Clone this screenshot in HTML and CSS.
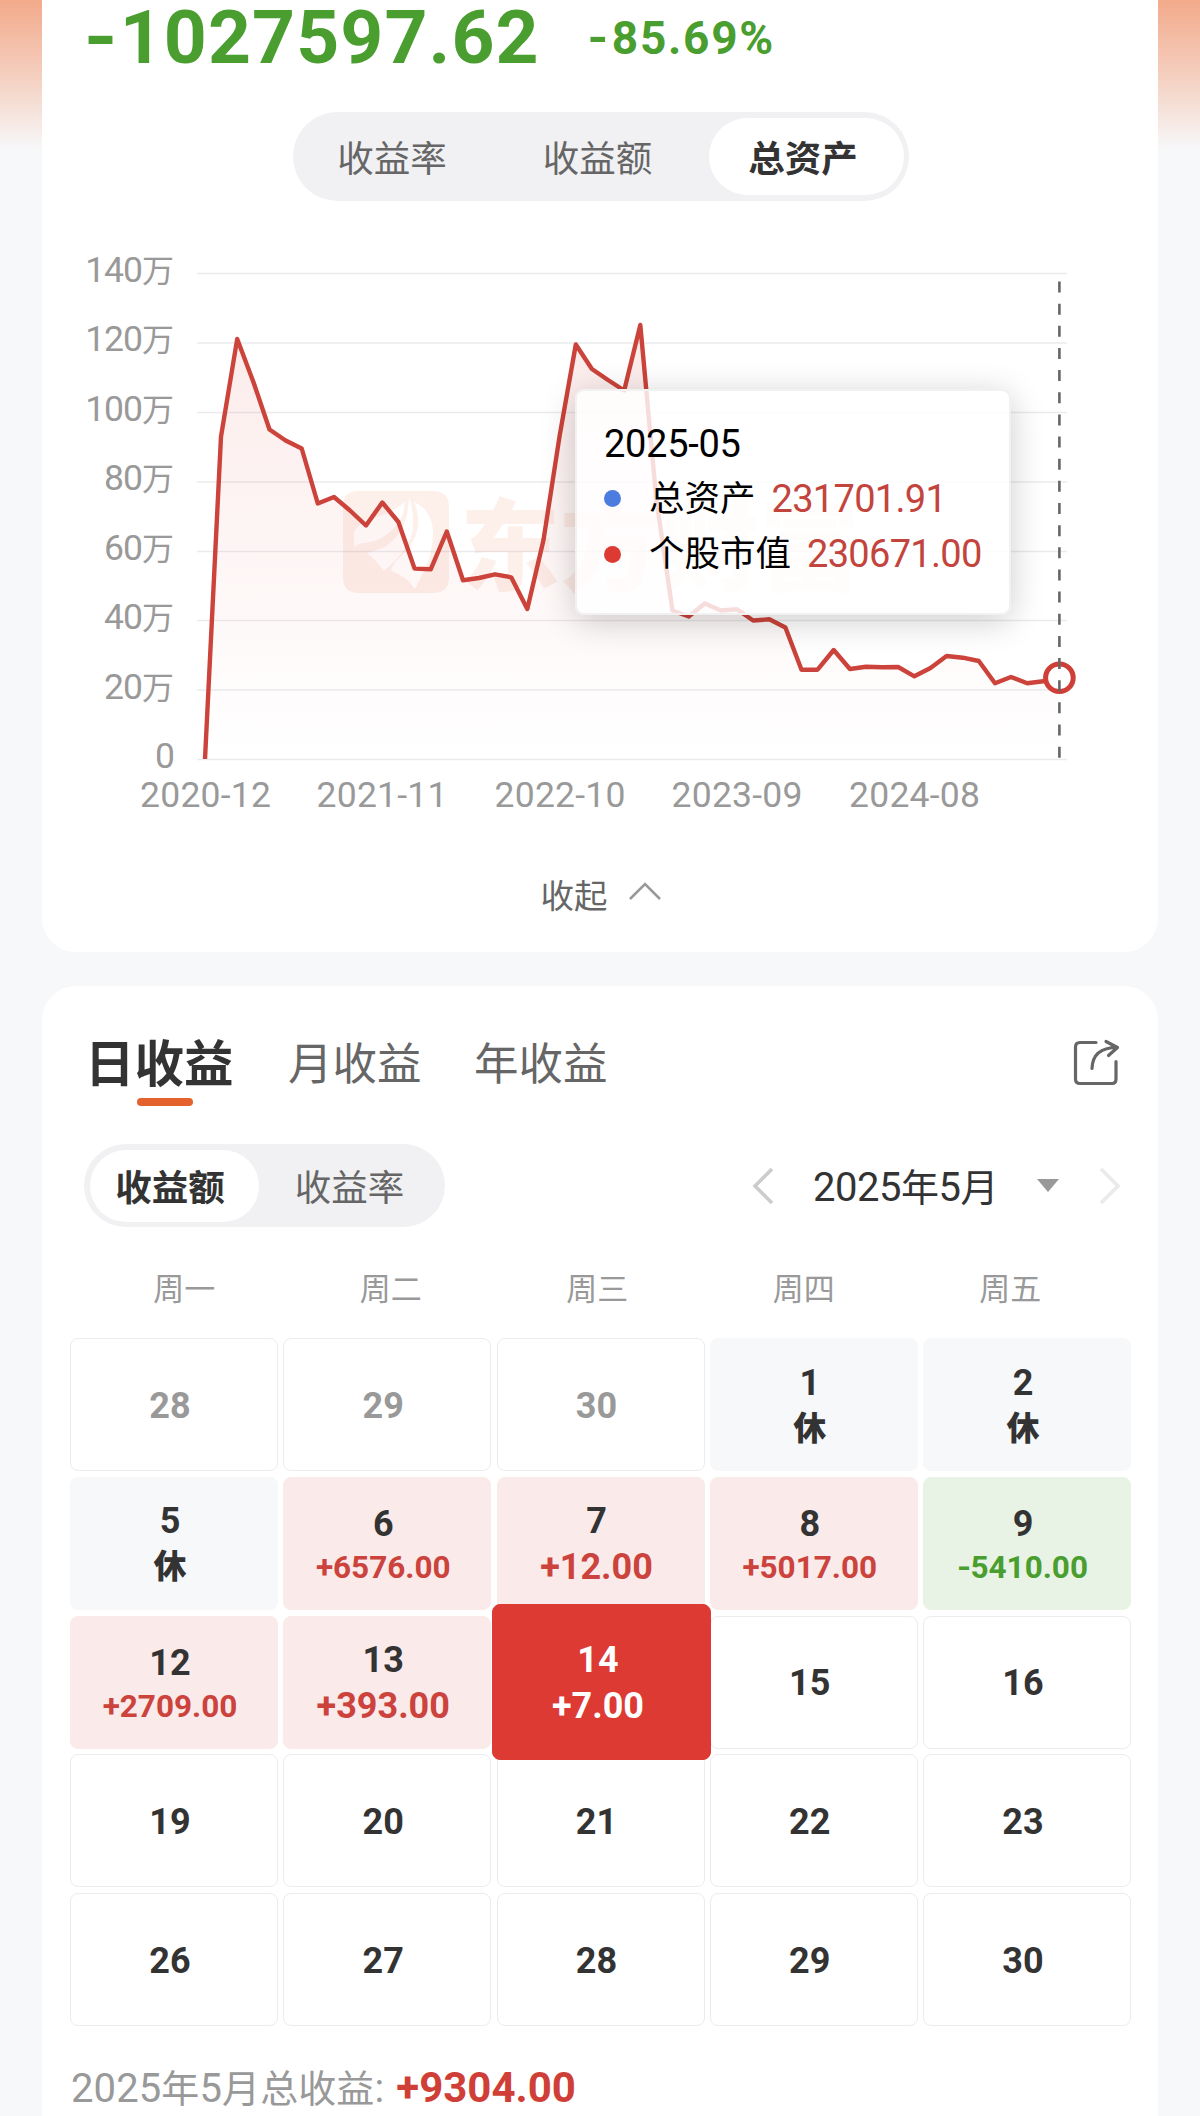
FILE: index.html
```html
<!DOCTYPE html>
<html lang="zh-CN">
<head>
<meta charset="utf-8">
<title>收益</title>
<link rel="stylesheet" href="styles.css">
</head>
<body>
<main class="page">
  <section class="card assets">
    <div class="summary"><span class="total"><i class="sign">-</i>1027597.62</span><span class="rate"><i class="sign">-</i>85.69%</span></div>
    <nav class="segment segment-top"><span>收益率</span><span>收益额</span><span class="on">总资产</span></nav>
    <div class="chart">
      <svg class="plot" viewBox="42 240 1116 610" width="1116" height="610">
        <defs>
          <linearGradient id="area" x1="0" y1="325" x2="0" y2="759" gradientUnits="userSpaceOnUse">
            <stop offset="0" stop-color="#dd3a33" stop-opacity=".1"/>
            <stop offset="1" stop-color="#dd3a33" stop-opacity="0"/>
          </linearGradient>
        </defs>
        <g class="grid">
          <path d="M197 273.5H1067M197 343H1067M197 412.5H1067M197 482H1067M197 551.5H1067M197 620.5H1067M197 690H1067M197 759.5H1067"/>
        </g>
        <path class="area" fill="url(#area)" d="M205 759L221 436.7L237.2 339L253.4 382L269.5 429.5L285.6 440.5L301.7 448.5L317.8 503.5L334 497L350 510.5L366 525.5L382.3 502.5L398.4 522L414.6 568.6L430.7 569.3L446.8 531.5L463 580.3L479 578L495 574.3L511.2 577.3L527.3 609L543.5 540L559.6 436L575.8 344.5L591.9 369L608 380L624.2 390.5L640.3 325L656.4 500L672.5 610.5L688.7 616.5L704.8 603.5L720.9 610.5L737 609.3L753.1 620.5L769.3 619.3L785.4 627.5L801.5 669.7L817.6 669.7L833.7 650L849.9 669L866 666.7L882.1 667.3L898.2 667L914.4 676.3L930.5 668L946.6 656L962.7 657.7L978.8 661L995 683.3L1011 677L1027.2 683.3L1043.3 681.3L1059.4 677.7V759Z"/>
        <g class="watermark">
          <path fill-rule="evenodd" d="M358 491H433Q449 491 449 507V577Q449 593 433 593H359Q343 593 343 577V507Q343 491 358 491ZM404 502C405 518 396 529 380 539C369 544 361 541 354 547L354 537C352 524 371 520 385 514C395 510 402 505 404 502ZM409 498C408 521 403 534 385 547L367 553Q376 560 384 571C396 560 414 544 413 522Q413 509 409 498ZM414 502C422 520 420 540 398 559Q392 565 391 571Q408 577 415 589L424 571Q432 556 433 535C434 514 421 505 414 502Z"/>
          <text class="brand" x="460" y="583">东方财富</text>
        </g>
        <path class="line" d="M205 759L221 436.7L237.2 339L253.4 382L269.5 429.5L285.6 440.5L301.7 448.5L317.8 503.5L334 497L350 510.5L366 525.5L382.3 502.5L398.4 522L414.6 568.6L430.7 569.3L446.8 531.5L463 580.3L479 578L495 574.3L511.2 577.3L527.3 609L543.5 540L559.6 436L575.8 344.5L591.9 369L608 380L624.2 390.5L640.3 325L656.4 500L672.5 610.5L688.7 616.5L704.8 603.5L720.9 610.5L737 609.3L753.1 620.5L769.3 619.3L785.4 627.5L801.5 669.7L817.6 669.7L833.7 650L849.9 669L866 666.7L882.1 667.3L898.2 667L914.4 676.3L930.5 668L946.6 656L962.7 657.7L978.8 661L995 683.3L1011 677L1027.2 683.3L1043.3 681.3L1059.4 677.7"/>
        <circle class="marker" cx="1059.4" cy="677.7" r="13.8"/>
        <path class="cursor" d="M1059.4 281.5V759"/>
        <g class="axis axis-y">
          <text x="174" y="282">140<tspan>万</tspan></text>
          <text x="174" y="351">120<tspan>万</tspan></text>
          <text x="174" y="421">100<tspan>万</tspan></text>
          <text x="174" y="490">80<tspan>万</tspan></text>
          <text x="174" y="560">60<tspan>万</tspan></text>
          <text x="174" y="629">40<tspan>万</tspan></text>
          <text x="174" y="699">20<tspan>万</tspan></text>
          <text x="174" y="768">0</text>
        </g>
        <g class="axis axis-x">
          <text x="205.5" y="807" textLength="131">2020-12</text>
          <text x="382" y="807" textLength="131">2021-11</text>
          <text x="560" y="807" textLength="131">2022-10</text>
          <text x="737" y="807" textLength="131">2023-09</text>
          <text x="914.5" y="807" textLength="131">2024-08</text>
        </g>
      </svg>
      <div class="tooltip">
        <div class="tip-title">2025-05</div>
        <div class="tip-row"><b class="dot blue"></b><span class="tip-name">总资产</span><span class="tip-value">231701.91</span></div>
        <div class="tip-row"><b class="dot red"></b><span class="tip-name">个股市值</span><span class="tip-value">230671.00</span></div>
      </div>
    </div>
    <div class="collapse"><span>收起</span>
      <svg width="34" height="20" viewBox="0 0 34 20"><path d="M2 18L17 3L32 18"/></svg>
    </div>
  </section>

  <section class="card profit">
    <header class="tabs">
      <span class="tab current">日收益</span><span class="tab month">月收益</span><span class="tab">年收益</span>
      <svg class="share" width="48" height="48" viewBox="0 0 48 48"><path d="M24 3.5H8Q3.500 3.500 3.500 8V40Q3.500 44.500 8 44.500H40Q44 44.500 44 40V22.500M20 29.500C20.500 15 29 8.500 45 8.500M34 2.500L45.500 8.500L36.500 16.500"/></svg>
    </header>
    <div class="controls">
      <nav class="segment segment-small"><span class="on">收益额</span><span>收益率</span></nav>
      <div class="picker">
        <svg class="prev" width="24" height="40" viewBox="0 0 24 40"><path d="M21 3L4 20L21 37"/></svg>
        <span class="period">2025<em>年</em>5<em>月</em></span>
        <b class="caret"></b>
        <svg class="next" width="24" height="40" viewBox="0 0 24 40"><path d="M3 3L20 20L3 37"/></svg>
      </div>
    </div>
    <div class="weekdays"><span>周一</span><span>周二</span><span>周三</span><span>周四</span><span>周五</span></div>
    <div class="calendar">
      <div class="day out">28</div><div class="day out">29</div><div class="day out">30</div><div class="day rest">1<strong>休</strong></div><div class="day rest">2<strong>休</strong></div>
      <div class="day rest">5<strong>休</strong></div><div class="day up">6<small>+6576.00</small></div><div class="day up">7<span>+12.00</span></div><div class="day up">8<small>+5017.00</small></div><div class="day down">9<small><i class="sign">-</i>5410.00</small></div>
      <div class="day up">12<small>+2709.00</small></div><div class="day up">13<span>+393.00</span></div><div class="day today">14<span>+7.00</span></div><div class="day">15</div><div class="day">16</div>
      <div class="day">19</div><div class="day">20</div><div class="day">21</div><div class="day">22</div><div class="day">23</div>
      <div class="day">26</div><div class="day">27</div><div class="day">28</div><div class="day">29</div><div class="day">30</div>
    </div>
    <footer class="month-total">2025<em>年</em>5<em>月总收益</em>: <b>+9304.00</b></footer>
  </section>
</main>
</body>
</html>
```
FILE: styles.css
```css
* { box-sizing: border-box; }
body {
  margin: 0;
  background: #f7f8fa;
  font-family: Roboto, "Noto Sans CJK SC", sans-serif;
  color: #333;
}
i, em { font-style: normal; }
.page {
  width: 1200px;
  height: 2116px;
  overflow: hidden;
  padding: 0 42px;
  background: linear-gradient(180deg, #f2aa8a 0, #f4c2ad 50px, #f5dcd2 100px, #f7f8fa 150px);
}
.card { background: #fff; }
.sign { display: inline-block; transform: scaleX(1.15); }

/* Assets card */
.assets { height: 952px; border-radius: 0 0 34px 34px; }
.summary {
  height: 112px;
  display: flex;
  align-items: flex-start;
  padding-left: 44px;
  color: #4a9e2f;
  font-weight: 700;
  white-space: nowrap;
}
.total { width: 503px; font-size: 75px; line-height: 75px; letter-spacing: 1.1px; }
.rate { font-size: 46px; line-height: 76px; letter-spacing: 1.700px; }
.total .sign, .rate .sign { margin-right: 3px; }
.segment { display: flex; background: #f1f1f4; color: #666; }
.segment span { display: flex; align-items: center; justify-content: center; font-size: 36.5px; }
.segment .on { background: #fff; color: #333; font-weight: 700; }
.segment-top { width: 616px; height: 89px; border-radius: 45px; margin-left: 251px; padding: 6px 5px; }
.segment-top span { flex: 1 1 0; padding-bottom: 1px; }
.segment-top span:first-child, .segment-top span:nth-child(2) { flex: 0 0 205px; }
.segment-top span:first-child { margin-left: -7px; padding-right: 3px; }
.segment-top span:nth-child(2) { padding-right: 2px; margin-right: 8px; }
.segment-top .on { border-radius: 39px; padding-right: 7px; }

.chart { position: relative; height: 649px; padding-top: 39px; }
.plot { display: block; }
.grid path { stroke: #eaebee; stroke-width: 1.5; fill: none; }
.line { fill: none; stroke: #cb433a; stroke-width: 4.4; stroke-linejoin: round; }
.marker { fill: #fff; stroke: #cf3f38; stroke-width: 5; }
.cursor { stroke: #666; stroke-width: 2.6; stroke-dasharray: 11 11.15; }
.watermark { fill: #e8703a; fill-opacity: .1; }
.brand { font-size: 100px; font-weight: 900; }
.axis { fill: #999; font-size: 35.500px; font-weight: 400; }
.axis-y { text-anchor: end; letter-spacing: -1px; }
.axis-y tspan { font-size: 32px; letter-spacing: 0; }
.axis-x { text-anchor: middle; }

.tooltip {
  position: absolute;
  left: 533px;
  top: 188px;
  width: 436px;
  height: 226px;
  padding: 26px 0 0 27px;
  border: 2px solid #f1f1f1;
  border-radius: 9px;
  background: rgba(255, 255, 255, .82);
  box-shadow: 0 6px 34px rgba(0, 0, 0, .2);
  color: #000;
}
.tip-title { height: 54px; line-height: 54px; font-size: 38px; letter-spacing: -.3px; }
.tip-row { display: flex; align-items: center; height: 55.5px; }
.dot { width: 17px; height: 17px; border-radius: 50%; margin-right: 28px; }
.blue { background: #4c7ce0; }
.red { background: #dc3a33; }
.tip-name { font-size: 35.500px; line-height: 50px; margin-right: 16px; }
.tip-value { font-size: 38px; letter-spacing: -.7px; color: #c3443d; }
.collapse { height: 60px; margin: 13px 0 0 2px; display: flex; align-items: center; justify-content: center; gap: 20px; padding-top: 1px; font-size: 33.500px; color: #666; }
.collapse svg { fill: none; stroke: #999; stroke-width: 2.6; margin-bottom: 5px; }

/* Profit card */
.profit { margin-top: 34px; height: 1130px; border-radius: 34px 34px 0 0; }
.tabs { height: 158px; display: flex; align-items: center; padding: 0 38px 9px 43px; font-size: 44.500px; color: #666; }
.current { position: relative; width: 203px; font-size: 49.500px; font-weight: 700; color: #333; }
.current::after {
  content: "";
  position: absolute;
  left: 52px;
  bottom: -10px;
  width: 56px;
  height: 8px;
  border-radius: 4px;
  background: #e3622e;
}
.month { width: 186px; }
.share { margin: 5px 0 0 auto; fill: none; stroke: #666; stroke-width: 3.2; stroke-linecap: round; stroke-linejoin: round; }
.controls { height: 83px; display: flex; justify-content: space-between; padding: 0 36px 0 42px; }
.segment-small { width: 361px; height: 83px; border-radius: 42px; padding: 6px 5px 5px 6px; }
.segment-small span { flex: 1; padding-bottom: 2px; }
.segment-small .on { flex: 0 0 169px; border-radius: 37px; padding-right: 9px; }
.picker { display: flex; align-items: center; }
.picker svg { fill: none; stroke-width: 3.6; }
.prev { stroke: #ccc; }
.next { stroke: #eaeaea; }
.period { width: 224px; margin-left: 38px; padding-bottom: 2px; font-size: 40px; letter-spacing: -.5px; white-space: nowrap; }
.period em { font-size: 38px; }
.caret { width: 22px; height: 13px; margin-right: 39px; background: #999; clip-path: polygon(0 0, 100% 0, 50% 100%); }

.weekdays { height: 111px; margin-left: 39px; width: 1032.500px; display: grid; grid-template-columns: repeat(5, 1fr); align-items: center; text-align: center; font-size: 31px; color: #999; padding-top: 8px; }
.calendar { margin-left: 28px; width: 1061px; display: grid; grid-template-columns: repeat(5, 208px); justify-content: space-between; grid-auto-rows: 133px; row-gap: 5.750px; }
.day {
  display: flex;
  flex-direction: column;
  align-items: center;
  justify-content: center;
  padding: 2px 8px 0 0;
  border: 1px solid #ececec;
  border-radius: 8px;
  font-size: 36px;
  line-height: 46px;
  font-weight: 700;
  white-space: nowrap;
}
.day strong { font-size: 33px; }
.day small { font-size: 31.500px; line-height: 41px; }
.out { color: #999; }
.rest { background: #f7f8fa; border-color: #f7f8fa; }
.up { background: #faeaea; border-color: #faeaea; }
.up small, .up span { color: #cb433c; }
.down { background: #e8f3e6; border-color: #e8f3e6; }
.down small { color: #4a9e2f; }
.today { margin: -12px -6px -11px -5px; padding-right: 6px; background: #dd3a33; border-color: #dd3a33; color: #fff; z-index: 1; }
.month-total { padding: 34px 0 0 29px; font-size: 40px; line-height: 56px; color: #999; white-space: nowrap; letter-spacing: .1px; }
.month-total em { font-size: 38px; }
.month-total b { margin-left: 2px; color: #cf3f38; font-size: 42px; letter-spacing: 0; }
```
